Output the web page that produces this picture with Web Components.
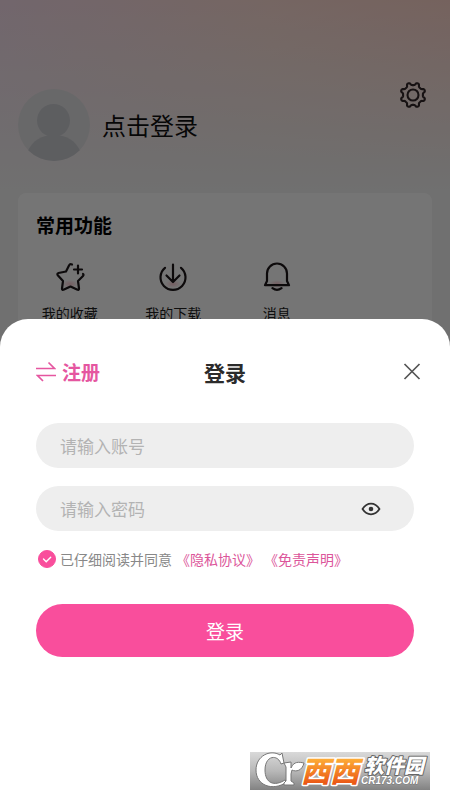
<!DOCTYPE html>
<html lang="zh-CN">
<head>
<meta charset="utf-8">
<meta name="viewport" content="width=device-width, initial-scale=1">
<title>登录</title>
<style>
html,body{margin:0}
body{font-family:"Noto Sans CJK SC","Noto Sans",sans-serif;color:#111;background:#fff}
</style>
</head>
<body>
<app-screen>
  <profile-page slot="page">
    <feature-item name="star">我的收藏</feature-item>
    <feature-item name="download">我的下载</feature-item>
    <feature-item name="bell">消息</feature-item>
  </profile-page>
  <login-sheet slot="sheet">
    <text-field kind="text" hint="请输入账号"></text-field>
    <text-field kind="password" hint="请输入密码"></text-field>
    <site-badge slot="badge"></site-badge>
  </login-sheet>
</app-screen>
<script>
const define=(name,html,setup)=>customElements.define(name,class extends HTMLElement{
  constructor(){super();this.attachShadow({mode:'open'});}
  connectedCallback(){
    this.shadowRoot.innerHTML='<style>*,:host{box-sizing:border-box}button,input{font:inherit;color:inherit;border:0;padding:0;margin:0;background:none}svg{display:block}</style>'+html;
    if(setup)setup(this,this.shadowRoot);
  }
});

define('app-screen',`<style>
:host{display:grid;grid-template:minmax(100vh,auto)/minmax(0,1fr)}
.page,.dim,.sheet{grid-area:1/1}
.dim{background:rgba(0,0,0,.54)}
.sheet{align-self:end}
</style><div class="page"><slot name="page"></slot></div><div class="dim"></div><div class="sheet"><slot name="sheet"></slot></div>`);

define('profile-page',`<style>
:host{display:block;min-height:100vh;padding:79px 18px 0;
 background:linear-gradient(#f3f3f300,#f3f3f3 190px),linear-gradient(90deg,#f8deec,#ffded6 60%,#ffd6cd)}
header{display:flex;align-items:flex-start}
.user{flex:1;display:flex;align-items:center;gap:12px;padding-top:10px;font-size:24px;line-height:36px}
.card{margin-top:32px;min-height:240px;background:#fff;border-radius:8px}
h2{margin:0;padding:18px 18px 0;font-size:19px;line-height:28px;font-weight:700;color:#000}
.grid{display:grid;grid-template-columns:repeat(4,1fr);padding-top:22px}
.gear{margin-right:3px}
</style>
<header><button class="user">
<svg width="72" height="72" viewBox="0 0 72 72"><defs><clipPath id="c"><circle cx="36" cy="36" r="36"/></clipPath></defs><circle cx="36" cy="36" r="36" fill="#e3e2e5"/><g clip-path="url(#c)" fill="#cbcdd2"><circle cx="35.5" cy="31.500" r="16.500"/><path d="M9 64C14 51 24 46 36 46s22 5 27 18v9H9z"/></g></svg>
<span>点击登录</span></button>
<button class="gear" aria-label="设置"><svg width="32" height="32" viewBox="-16 -16 32 32" fill="none" stroke="#33292b" stroke-width="2.100" stroke-linejoin="round"><path/><circle r="5.500"/></svg></button></header>
<section class="card"><h2>常用功能</h2><div class="grid"><slot></slot></div></section>`,(el,root)=>{
  // Eight-lobed gear outline with valleys on the axes.
  const pts=[];
  for(let i=0;i<160;i++){
    const a=i/160*Math.PI*2,r=11.3-1.4*Math.tanh(2*Math.cos(8*a)+.5);
    pts.push((r*Math.cos(a)).toFixed(2)+' '+(r*Math.sin(a)).toFixed(2));
  }
  root.querySelector('.gear path').setAttribute('d','M'+pts.join('L')+'Z');
});

const icons={
 star:'<path d="M18 3.500Q16 2.500 15 4.500L12 10.500 4.500 12Q2.500 12.500 4 14.500L9 20 8 27.500Q8 29.500 10 28.500L16.500 25.500 23 28.500Q25 29.500 25 27.500L24 20 29 15Q30 13.500 29 13M24 4.500v8M20 8.500h8"/>',
 download:'<path d="M8 6.800A12.500 12.500 0 1 0 24 6.800M16 3.500v17M9.500 14.500l6.500 6.500 6.500-6.500"/>',
 bell:'<path d="M6 20v-7.500a10 10 0 0 1 20 0V20l2 4.200H4zM11.500 27.200q4.500 3.500 9 0"/>'
};
define('feature-item',`<style>
:host{display:block}
button{display:flex;flex-direction:column;align-items:center;gap:10px;width:100%;font-size:14px;line-height:20px;color:#222}
</style><button><svg width="32" height="32" viewBox="0 0 32 32" fill="none" stroke="#1d171a" stroke-width="2.200" stroke-linecap="round" stroke-linejoin="round" aria-hidden="true"><defs><radialGradient id="g"><stop stop-color="#ff9aaa" stop-opacity=".5"/><stop offset="1" stop-color="#ff9aaa" stop-opacity="0"/></radialGradient></defs><ellipse cx="16" cy="23" rx="8" ry="4" fill="url(#g)" stroke="none"/><g></g></svg><span><slot></slot></span></button>`,(el,root)=>{
  root.querySelector('g').innerHTML=icons[el.getAttribute('name')];
});

define('text-field',`<style>
:host{display:block}
div{display:flex;align-items:center;height:45px;padding:0 33px 0 24px;border-radius:23px;background:#eee}
input{flex:1;min-width:0;height:100%;font-size:17px;outline:0;color:#333}
input::placeholder{color:#b3b3b3;opacity:1}
</style><div><input></div>`,(el,root)=>{
  const input=root.querySelector('input');
  input.type=el.getAttribute('kind');
  input.placeholder=el.getAttribute('hint');
  input.setAttribute('aria-label',input.placeholder);
  if(input.type==='password'){
    input.insertAdjacentHTML('afterend','<button type="button" aria-label="显示密码"><svg width="20" height="20" viewBox="0 0 20 20" fill="none" stroke="#333" stroke-width="1.800"><path d="M1.500 10Q5 4.700 10 4.700T18.500 10Q15 15.300 10 15.300T1.500 10Z" stroke-linejoin="round"/><circle cx="10" cy="10" r="2.300" fill="#333" stroke="none"/></svg></button>');
    root.querySelector('button').onclick=()=>{input.type=input.type==='password'?'text':'password';};
  }
});

define('login-sheet',`<style>
:host{display:flex;flex-direction:column;padding:37px 36px 10px;background:#fff;border-radius:28px 28px 0 0}
header{display:grid;grid-template-columns:1fr auto 1fr;align-items:center;height:32px}
.register{display:flex;align-items:center;gap:6px;font-size:19px;line-height:28px;font-weight:700;color:#e556a0}
h1{margin:0;font-size:21px;line-height:32px;font-weight:700;color:#2b2b2b}
.close{justify-self:end;margin-right:-8px}
.fields{display:grid;gap:18px;margin-top:35px}
.agree{display:flex;align-items:center;gap:4px;margin-top:18px;font-size:14px;line-height:20px;color:#888;white-space:nowrap}
label{display:flex;align-items:center;gap:3px}
.tick{display:grid;width:21px;height:20px;place-items:center}
.tick>*{grid-area:1/1}
.tick input{appearance:none;width:18px;height:18px;border-radius:50%;border:1px solid #bbb}
.tick input:checked{background:#f94e9c;border-color:#f94e9c}
.tick svg{pointer-events:none}
a{color:#dc559a;text-decoration:none}
.submit{margin-top:35px;height:53px;border-radius:27px;background:#f94e9c;color:#fff;font-size:19px;line-height:28px}
.badge{display:flex;justify-content:flex-end;margin:95px -16px 0 0}
</style>
<header><button class="register"><svg width="20" height="22" viewBox="0 0 20 22" fill="none" stroke="currentColor" stroke-width="1.700"><path d="M0 7.500h18.500L12.500 1.500M20 14.500H1.500l5.500 5.500"/></svg><span>注册</span></button>
<h1>登录</h1>
<button class="close" aria-label="关闭"><svg width="20" height="20" viewBox="0 0 20 20" fill="none" stroke="#555" stroke-width="1.700"><path d="M2.500 2L17.500 17M17.500 2L2.500 17"/></svg></button></header>
<div class="fields"><slot></slot></div>
<div class="agree"><label><span class="tick"><input type="checkbox" checked><svg width="18" height="18" viewBox="0 0 18 18" fill="none" stroke="#fff" stroke-width="1.400" stroke-linecap="round"><path d="M5.500 9l2.700 2.700 4.500-4.500"/></svg></span><span>已仔细阅读并同意</span></label><a href="#privacy">《隐私协议》</a><a href="#disclaimer">《免责声明》</a></div>
<button class="submit">登录</button>
<div class="badge"><slot name="badge"></slot></div>`);

define('site-badge',`<style>
:host{display:block}
svg{overflow:visible}
text{font-family:"Noto Sans CJK SC",sans-serif;font-weight:900;font-style:italic;paint-order:stroke;stroke-linejoin:round}
.latin{font-family:"Liberation Sans",sans-serif;font-weight:700}
</style><svg width="180" height="38" viewBox="0 0 180 38"><defs>
<linearGradient id="b" x2="0" y2="1"><stop stop-color="#d9d9d9"/><stop offset=".5" stop-color="#b8b8b8"/><stop offset="1" stop-color="#828282"/></linearGradient>
<linearGradient id="o" x2="0" y2="1"><stop offset=".2" stop-color="#ffb53a"/><stop offset=".9" stop-color="#e84f12"/></linearGradient></defs>
<rect width="180" height="38" fill="url(#b)"/>
<g fill="#fff" stroke="#777" stroke-width="1">
<path d="M32 1l2 10-3 1C28 2 15 3 15 18c0 13 9 17 20 10l2 2C22 40 6 33 6 18 6 4 20-3 30 3z"/>
<path d="M34 11l7-1v6c3-7 8-6 13-5-2 8-8 9-12 7l-1 4v7l3 2v2H34v-2l2-2V15z"/></g>
<text x="51" y="30" font-size="29" fill="url(#o)" stroke="#fff" stroke-width="3">西西</text>
<text x="114" y="21" font-size="20" fill="#fff" stroke="#666" stroke-width="2">软件园</text>
<text class="latin" x="111" y="32" font-size="10" fill="#fff" stroke="#777" stroke-width="1">CR173.COM</text>
</svg>`);
</script>
</body>
</html>
